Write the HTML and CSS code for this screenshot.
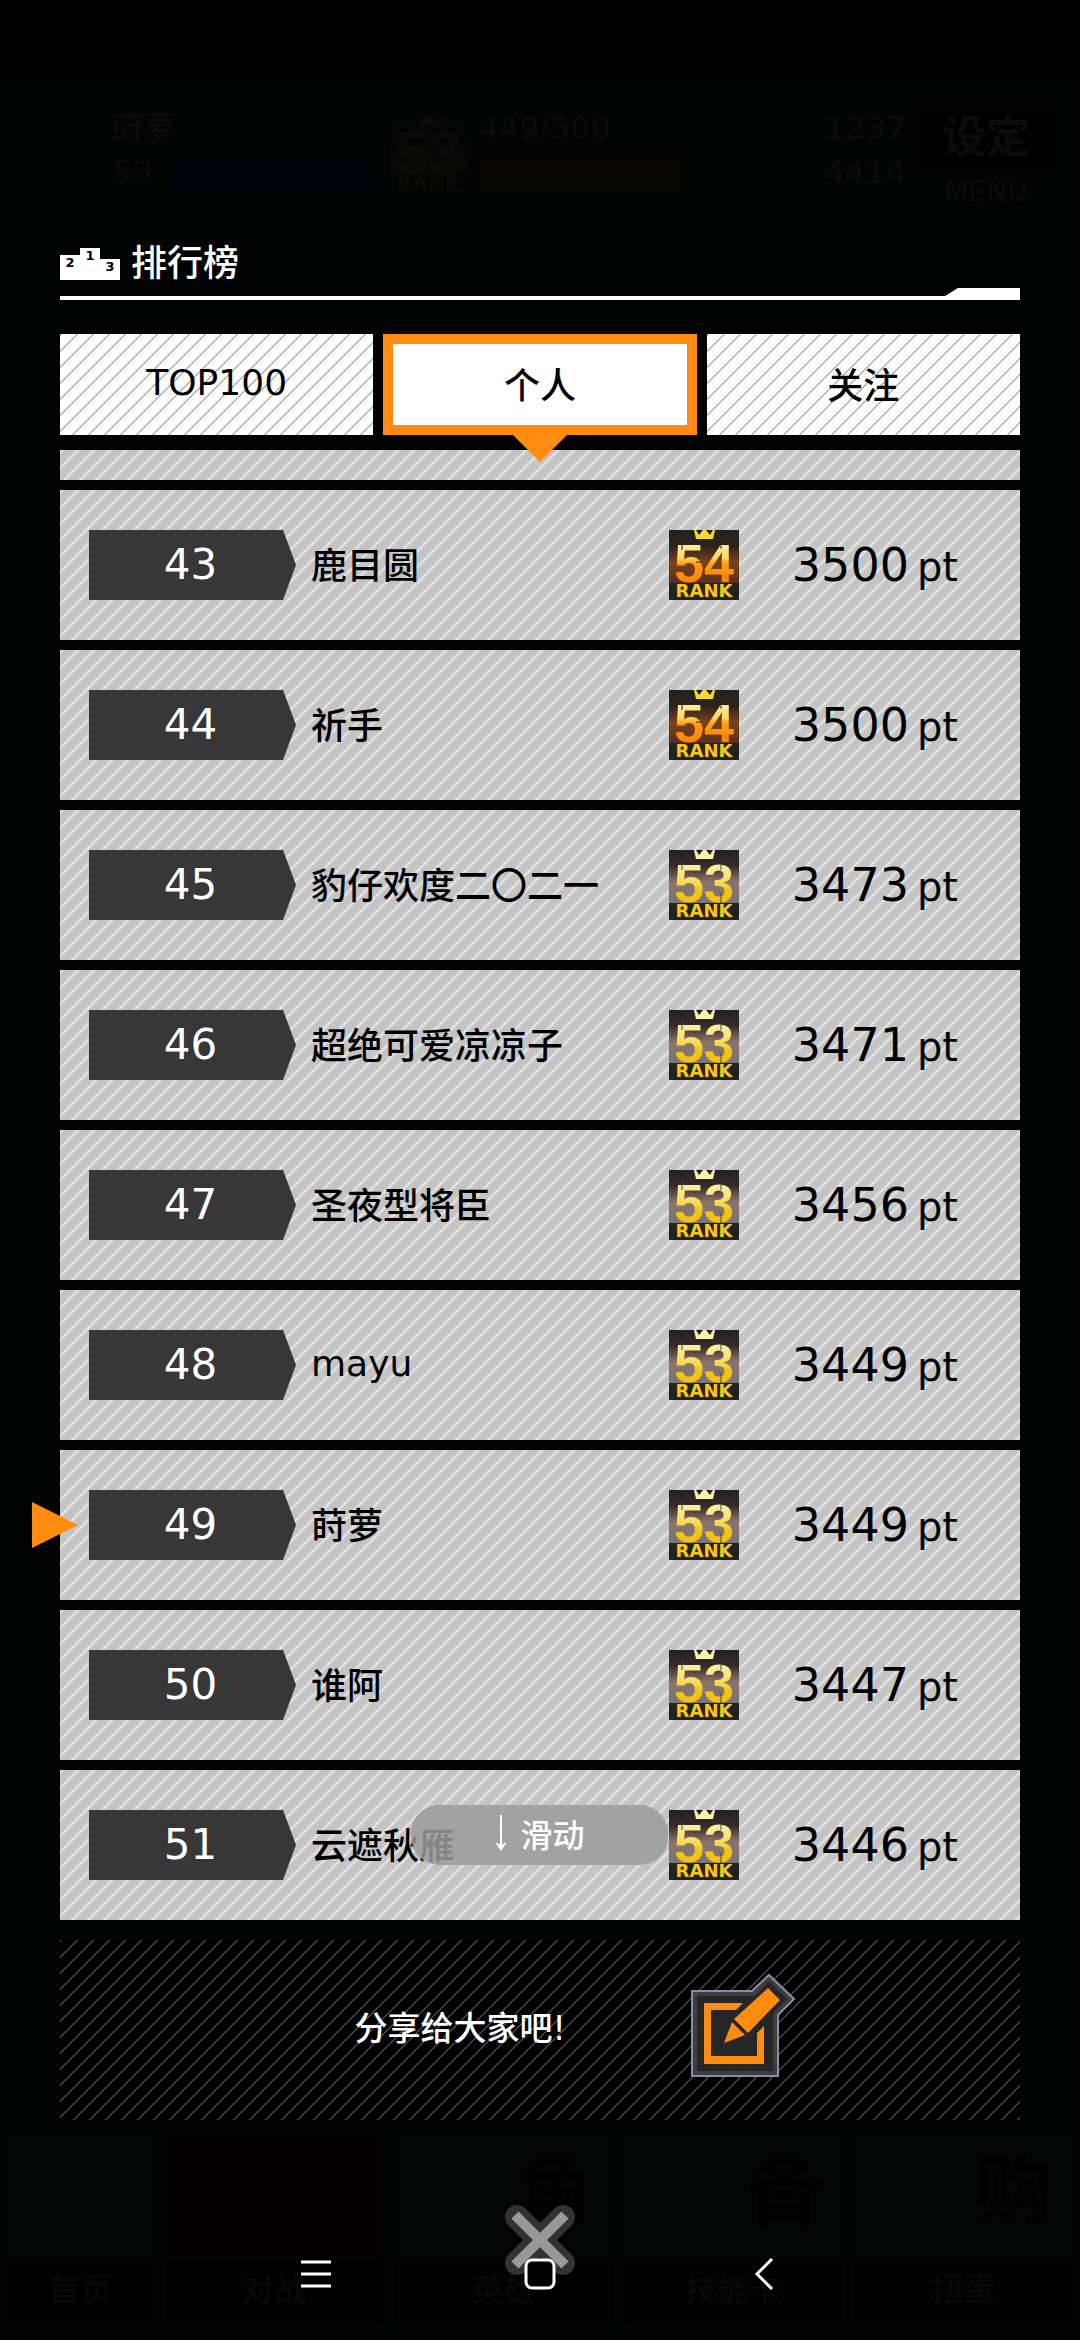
FILE: index.html
```
<!DOCTYPE html>
<html lang="zh-CN">
<head>
    <meta charset="UTF-8">
    <meta name="viewport" content="width=device-width, initial-scale=1.0">
    <title>排行榜</title>
    <link rel="stylesheet" href="styles.css">
</head>
<body>
    <!-- shared badge artwork -->
    <svg class="defs" aria-hidden="true">
        <defs>
            <linearGradient id="num54" x1="0" y1="12" x2="0" y2="52" gradientUnits="userSpaceOnUse">
                <stop offset="0" stop-color="#fff0a8"/>
                <stop offset="0.4" stop-color="#ffd766"/>
                <stop offset="0.55" stop-color="#ff9a10"/>
                <stop offset="1" stop-color="#ff8400"/>
            </linearGradient>
            <linearGradient id="num53" x1="0" y1="12" x2="0" y2="52" gradientUnits="userSpaceOnUse">
                <stop offset="0" stop-color="#fff3b0"/>
                <stop offset="0.5" stop-color="#f9dc5c"/>
                <stop offset="0.7" stop-color="#f5c518"/>
                <stop offset="1" stop-color="#f5c010"/>
            </linearGradient>
            <linearGradient id="back54" x1="0" y1="0" x2="0" y2="1">
                <stop offset="0" stop-color="#222"/>
                <stop offset="0.3" stop-color="#2c221c"/>
                <stop offset="0.6" stop-color="#7a4118"/>
                <stop offset="1" stop-color="#5a3020"/>
            </linearGradient>
            <linearGradient id="back53" x1="0" y1="0" x2="0" y2="1">
                <stop offset="0" stop-color="#222"/>
                <stop offset="0.3" stop-color="#332c2a"/>
                <stop offset="0.6" stop-color="#8b7468"/>
                <stop offset="1" stop-color="#777"/>
            </linearGradient>
            <symbol id="rank54" viewBox="0 0 70 70">
                <rect width="70" height="70" fill="#222"/>
                <rect width="70" height="53" fill="url(#back54)"/>
                <path d="M25 0h2l3 5 4-5h3l4 5 3-5h2l-2 9H27z" fill="#f8d838"/>
                <text x="5" y="52" class="badge-num" fill="url(#num54)">54</text>
                <path d="M13 11v9M33 32l-6 0M52 11v8" stroke="#2c221c" stroke-width="1"/>
                <rect y="53" width="70" height="17" fill="#222"/>
                <text x="35" y="67" class="badge-word">RANK</text>
            </symbol>
            <symbol id="rank53" viewBox="0 0 70 70">
                <rect width="70" height="70" fill="#222"/>
                <rect width="70" height="53" fill="url(#back53)"/>
                <path d="M25 0h2l3 5 4-5h3l4 5 3-5h2l-2 9H27z" fill="#fff0b0"/>
                <text x="5" y="52" class="badge-num" fill="url(#num53)">53</text>
                <path d="M13 11v9M52 11v9M52 43v10" stroke="#4a403a" stroke-width="1"/>
                <rect y="53" width="70" height="17" fill="#222"/>
                <text x="35" y="67" class="badge-word">RANK</text>
            </symbol>
        </defs>
    </svg>

    <div class="screen">
        <header class="hud">
            <div class="hud-player">
                <span>莳萝</span>
                <div class="hud-line"><span>58</span><i class="bar bar-blue"></i></div>
            </div>
            <svg class="hud-badge" viewBox="0 0 70 70"><use href="#rank53"/></svg>
            <div class="hud-exp">
                <span>449/500</span>
                <i class="bar bar-gold"></i>
            </div>
            <div class="hud-money"><span>1237</span><span>4414</span></div>
            <div class="hud-menu"><b>设定</b><span>MENU</span></div>
        </header>

        <main class="ranking">
            <div class="heading">
                <svg class="podium" viewBox="0 0 60 32" aria-hidden="true">
                    <path d="M0 7h20V0h20v11h20v21H0z" fill="#fff"/>
                    <text x="10" y="19">2</text>
                    <text x="30" y="12">1</text>
                    <text x="50" y="23">3</text>
                </svg>
                <h1>排行榜</h1>
            </div>
            <div class="rule"></div>

            <nav class="tabs">
                <button type="button" class="tab">TOP100</button>
                <button type="button" class="tab active">个人</button>
                <button type="button" class="tab">关注</button>
            </nav>

            <div class="list-wrap">
                <ol class="list">
                    <li class="row row-cut"></li>
                    <li class="row">
                        <span class="place">43</span><span class="name">鹿目圆</span>
                        <svg class="badge"><use href="#rank54"/></svg>
                        <span class="points">3500<small>pt</small></span>
                    </li>
                    <li class="row">
                        <span class="place">44</span><span class="name">祈手</span>
                        <svg class="badge"><use href="#rank54"/></svg>
                        <span class="points">3500<small>pt</small></span>
                    </li>
                    <li class="row">
                        <span class="place">45</span><span class="name">豹仔欢度二〇二一</span>
                        <svg class="badge"><use href="#rank53"/></svg>
                        <span class="points">3473<small>pt</small></span>
                    </li>
                    <li class="row">
                        <span class="place">46</span><span class="name">超绝可爱凉凉子</span>
                        <svg class="badge"><use href="#rank53"/></svg>
                        <span class="points">3471<small>pt</small></span>
                    </li>
                    <li class="row">
                        <span class="place">47</span><span class="name">圣夜型将臣</span>
                        <svg class="badge"><use href="#rank53"/></svg>
                        <span class="points">3456<small>pt</small></span>
                    </li>
                    <li class="row">
                        <span class="place">48</span><span class="name">mayu</span>
                        <svg class="badge"><use href="#rank53"/></svg>
                        <span class="points">3449<small>pt</small></span>
                    </li>
                    <li class="row me">
                        <span class="place">49</span><span class="name">莳萝</span>
                        <svg class="badge"><use href="#rank53"/></svg>
                        <span class="points">3449<small>pt</small></span>
                    </li>
                    <li class="row">
                        <span class="place">50</span><span class="name">谁阿</span>
                        <svg class="badge"><use href="#rank53"/></svg>
                        <span class="points">3447<small>pt</small></span>
                    </li>
                    <li class="row">
                        <span class="place">51</span><span class="name">云遮秋雁</span>
                        <svg class="badge"><use href="#rank53"/></svg>
                        <span class="points">3446<small>pt</small></span>
                    </li>
                </ol>
                <div class="scroll-hint">
                    <svg viewBox="0 0 14 36" aria-hidden="true">
                        <path d="M7 0v32" stroke="#fff" stroke-width="2"/>
                        <path d="M1 27l6 3 6-3-6 9z" fill="#fff"/>
                    </svg>
                    滑动
                </div>
            </div>

            <section class="share">
                <p>分享给大家吧!</p>
                <button type="button" class="share-btn" aria-label="分享">
                    <svg viewBox="0 0 106 106">
                        <path d="M2 18H62L79 2L104 26L88 42V103H2Z" fill="#444" fill-opacity="0.9" stroke="#8c8ca8" stroke-width="2"/>
                        <path d="M7 23H65L79 8L97 26L83 40V98H7Z" fill="#262626"/>
                        <path d="M53 30H14V91H74V53L67 60V83H21V37H46Z" fill="#ff8c10"/>
                        <path d="M78 15l12 12-32 33-14-14zM42 49l13 13-21 8z" fill="#ff8c10"/>
                    </svg>
                </button>
            </section>
        </main>

        <footer class="menu">
            <div class="menu-item narrow"><b></b><span>首页</span></div>
            <div class="menu-item hot"><b></b><span>对战</span></div>
            <div class="menu-item"><b>角</b><span>英雄</span></div>
            <div class="menu-item"><b>备</b><span>技能卡</span></div>
            <div class="menu-item"><b>购</b><span>扭蛋</span></div>
        </footer>

        <button type="button" class="close" aria-label="关闭">
            <svg viewBox="0 0 74 74">
                <path d="M14 14L60 60M60 14L14 60" stroke="#333" stroke-width="24" stroke-linejoin="round" stroke-linecap="round"/>
                <path d="M12 12L62 62M62 12L12 62" stroke="#999" stroke-width="10"/>
            </svg>
        </button>

        <nav class="sysnav">
            <button type="button" aria-label="菜单">
                <svg viewBox="0 0 32 32"><path d="M1 4h30M1 16h30M1 28h30" stroke="#fff" stroke-width="3"/></svg>
            </button>
            <button type="button" aria-label="主页">
                <svg viewBox="0 0 32 32"><rect x="2" y="2" width="28" height="28" rx="6" fill="#000" stroke="#fff" stroke-width="3"/></svg>
            </button>
            <button type="button" aria-label="返回">
                <svg viewBox="0 0 32 32"><path d="M24 1L9 16l15 15" fill="none" stroke="#fff" stroke-width="3"/></svg>
            </button>
        </nav>
    </div>
</body>
</html>
```
FILE: styles.css
```
* {
    box-sizing: border-box;
}
body {
    margin: 0;
    background-color: #000;
    color: #000;
    font-family: "DejaVu Sans", "Noto Sans CJK SC", sans-serif;
    font-size: 36px;
    font-weight: 500;
}
button {
    margin: 0;
    padding: 0;
    border: none;
    background: none;
    color: inherit;
    font: inherit;
    cursor: pointer;
}
svg {
    display: block;
}
.defs {
    position: absolute;
    width: 0;
    height: 0;
}
.screen {
    position: relative;
    min-height: 100vh;
    padding-top: 80px;
    background: linear-gradient(#000 80px, #020303 80px);
}

/* dimmed game bar behind the dialog */
.hud {
    display: flex;
    gap: 10px;
    height: 160px;
    padding: 26px 24px 0 112px;
    color: #0a0b0b;
    font-size: 32px;
    line-height: 44px;
}
.hud-player {
    width: 268px;
}
.hud-line {
    display: flex;
    gap: 16px;
}
.bar {
    flex: 1;
    display: block;
    height: 32px;
    margin-top: 8px;
}
.bar-blue {
    background-color: #000308;
}
.bar-gold {
    background-color: #060400;
}
.hud-badge {
    width: 78px;
    height: 78px;
    margin-top: 10px;
    opacity: 0.03;
}
.hud-exp {
    width: 204px;
}
.hud-money {
    flex: 1;
    display: flex;
    flex-direction: column;
    align-items: flex-end;
}
.hud-menu {
    display: flex;
    flex-direction: column;
    width: 140px;
    text-align: center;
    font-size: 28px;
}
.hud-menu b {
    background-color: #000;
    font-size: 44px;
    line-height: 64px;
}

.ranking {
    padding: 0 60px;
}
.heading {
    display: flex;
    align-items: center;
    gap: 11px;
    height: 48px;
    color: #fff;
}
.heading h1 {
    margin: 0;
    font-size: 36px;
    font-weight: 500;
    line-height: 48px;
}
.podium {
    width: 60px;
    height: 32px;
}
.podium text {
    font-size: 13px;
    font-weight: bold;
    text-anchor: middle;
}
.rule {
    height: 12px;
    background-color: #fff;
    clip-path: polygon(0 8px, calc(100% - 75px) 8px, calc(100% - 62px) 0, 100% 0, 100% 100%, 0 100%);
}

.tabs {
    display: grid;
    grid-template-columns: repeat(3, 1fr);
    gap: 10px;
    margin-top: 34px;
}
.tab {
    position: relative;
    height: 101px;
    padding-bottom: 4px;
    background: #fff linear-gradient(135deg, #b4b4b4 8%, #fff 8%, #fff 50%, #b4b4b4 50%, #b4b4b4 58%, #fff 58%) 0 0 / 16px 16px;
}
.tab.active {
    border: 10px solid #ff8c10;
    background: #fff;
}
.tab.active::after {
    content: "";
    position: absolute;
    z-index: 1;
    top: 90px;
    left: 50%;
    margin-left: -28px;
    border: 28px solid transparent;
    border-top-color: #ff8c10;
    border-bottom: none;
}

.list-wrap {
    position: relative;
    margin-top: 15px;
}
.list {
    display: flex;
    flex-direction: column;
    gap: 10px;
    margin: 0;
    padding: 0;
    list-style: none;
}
.row {
    position: relative;
    display: flex;
    align-items: center;
    height: 150px;
    padding: 0 62px 0 29px;
    background: #c4c4c4 linear-gradient(135deg, #dedede 13%, #c4c4c4 13%, #c4c4c4 50%, #dedede 50%, #dedede 63%, #c4c4c4 63%) 0 0 / 16px 16px;
}
.row-cut {
    height: 30px;
}
.me::before {
    content: "";
    position: absolute;
    left: -28px;
    border: 23px solid transparent;
    border-left: 46px solid #ff8c10;
    border-right: none;
}
.place {
    width: 207px;
    padding-right: 4px;
    background-color: #373737;
    clip-path: polygon(0 0, 194px 0, 100% 50%, 194px 100%, 0 100%);
    color: #fff;
    font-size: 42px;
    line-height: 70px;
    text-align: center;
}
.name {
    flex: 1;
    margin-left: 15px;
    padding-bottom: 4px;
    white-space: nowrap;
}
.badge {
    width: 70px;
    height: 70px;
}
.badge-num {
    font-family: "Liberation Sans", sans-serif;
    font-size: 54px;
    font-weight: bold;
}
.badge-word {
    fill: #f8c818;
    font-size: 18px;
    font-weight: bold;
    text-anchor: middle;
}
.points {
    width: 219px;
    font-size: 46px;
    text-align: right;
}
.points small {
    margin-left: 8px;
    font-size: 40px;
}
.scroll-hint {
    position: absolute;
    right: 352px;
    bottom: 55px;
    display: flex;
    align-items: center;
    justify-content: center;
    gap: 12px;
    width: 257px;
    height: 60px;
    padding-bottom: 4px;
    border-radius: 28px;
    background-color: rgba(155, 155, 155, 0.85);
    color: #fff;
    font-size: 32px;
}
.scroll-hint svg {
    width: 14px;
    height: 36px;
}

.share {
    display: flex;
    align-items: center;
    justify-content: center;
    gap: 124px;
    height: 180px;
    margin-top: 20px;
    padding: 0 0 8px 70px;
    background: #000 linear-gradient(135deg, #444 9%, #000 9%, #000 50%, #444 50%, #444 59%, #000 59%) 0 0 / 16px 16px;
    color: #fff;
    font-size: 33px;
}
.share p {
    margin: 0;
}
.share-btn svg {
    width: 106px;
    height: 106px;
}

/* dimmed main menu */
.menu {
    display: flex;
    gap: 12px;
    margin-top: 12px;
    padding: 0 8px;
    color: #000;
    text-align: center;
}
.menu-item {
    flex: 3;
    display: flex;
    flex-direction: column;
    height: 190px;
    background-color: #030404;
}
.menu-item.narrow {
    flex: 2;
}
.menu-item.hot {
    background-color: #040200;
}
.menu-item b {
    flex: 1;
    padding-right: 20px;
    font-size: 76px;
    line-height: 120px;
    text-align: right;
}
.menu-item span {
    color: #080909;
    background-color: #000;
    font-size: 32px;
    line-height: 64px;
}

.close {
    position: absolute;
    bottom: 63px;
    left: 50%;
    margin-left: -37px;
}
.close svg {
    width: 74px;
    height: 74px;
}
.sysnav {
    position: absolute;
    bottom: 50px;
    left: 0;
    right: 0;
    display: flex;
    justify-content: center;
    gap: 192px;
}
.sysnav svg {
    width: 32px;
    height: 32px;
}
```
